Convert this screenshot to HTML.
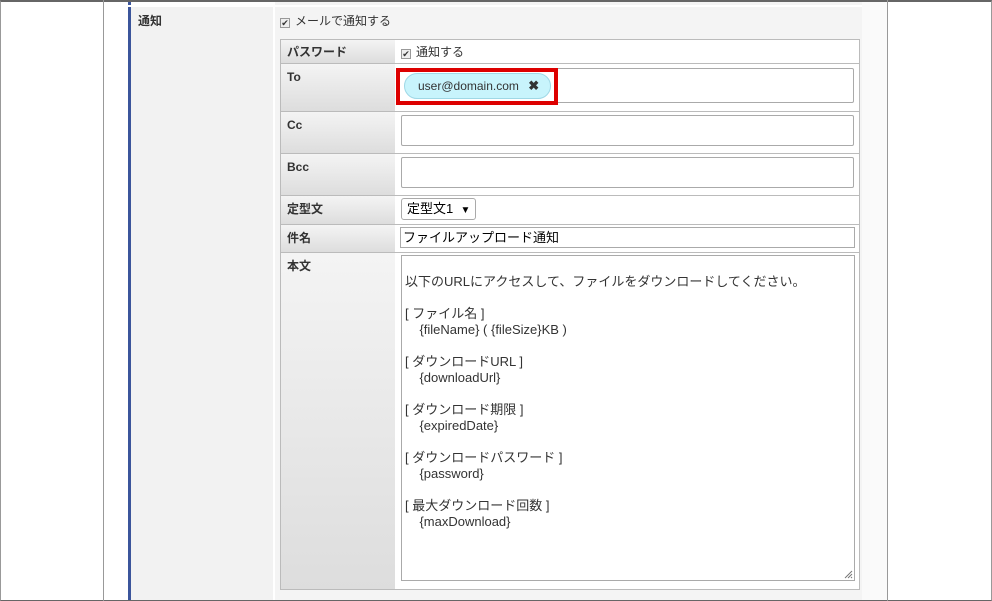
<!DOCTYPE html>
<html><head><meta charset="utf-8"><style>
*{box-sizing:border-box}
body{margin:0;width:992px;height:601px;background:#fff;font-family:"Liberation Sans","Noto Sans CJK JP",sans-serif;font-size:12px;color:#333;position:relative;overflow:hidden}
div{position:absolute}
.cb{display:inline-block;width:10px;height:10px;border:1px solid #999;background:#eee;vertical-align:-1px;margin-right:5px;position:relative;font-size:9px;line-height:8px;text-align:center;color:#333}
.h{left:280px;width:116px;background:linear-gradient(#f4f4f4,#ddd);font-weight:bold;padding:6px 6px;font-size:12px;line-height:14px;border:1px solid #bbb}
.v{left:395px;width:465px;background:#fff;border:1px solid #bbb;border-left:none;line-height:14px}
.inp{border:1px solid #aaa;border-radius:2px;background:#fff}
</style></head><body>
<div style="left:0;top:0;width:992px;height:601px;border-top:2px solid #666;border-bottom:1px solid #666;border-left:1px solid #999;border-right:1px solid #999"></div>
<div style="left:103px;top:0;width:1px;height:601px;background:#999"></div>
<div style="left:887px;top:0;width:1px;height:601px;background:#999"></div>
<div style="left:862px;top:2px;width:25px;height:598px;background:#fafafa"></div>
<div style="left:128px;top:2px;width:3px;height:3px;background:#3b559b"></div>
<div style="left:275px;top:2px;width:587px;height:3px;background:#f4f4f4"></div>
<div style="left:128px;top:7px;width:145px;height:593px;background:#f2f2f2;border-left:3px solid #3b559b"><div style="left:7px;top:5px;font-weight:bold">通知</div></div>
<div style="left:275px;top:7px;width:587px;height:593px;background:#f4f4f4"><div style="left:5px;top:5px;white-space:nowrap"><span class="cb">✔</span>メールで通知する</div></div>

<div class="h" style="top:39px;height:25px;padding-top:5px">パスワード</div>
<div class="v" style="top:39px;height:25px;padding:5px 6px"><span class="cb">✔</span>通知する</div>
<div class="h" style="top:63px;height:49px">To</div>
<div class="v" style="top:63px;height:49px"></div>
<div class="h" style="top:111px;height:43px">Cc</div>
<div class="v" style="top:111px;height:43px"></div>
<div class="h" style="top:153px;height:43px">Bcc</div>
<div class="v" style="top:153px;height:43px"></div>
<div class="h" style="top:195px;height:30px">定型文</div>
<div class="v" style="top:195px;height:30px"></div>
<div class="h" style="top:224px;height:29px">件名</div>
<div class="v" style="top:224px;height:29px"></div>
<div class="h" style="top:252px;height:338px">本文</div>
<div class="v" style="top:252px;height:338px"></div>

<div class="inp" style="left:401px;top:68px;width:453px;height:35px"></div>
<div style="left:396px;top:68px;width:162px;height:37px;border:4px solid #d00;background:#fff"></div>
<div style="left:404px;top:73px;width:147px;height:26px;background:#c8f4fc;border:1px solid #9fd8e6;border-radius:13px;line-height:24px;padding-left:13px;font-size:12px;color:#333;white-space:nowrap">user@domain.com <b style="margin-left:6px;font-size:13px">✖</b></div>
<div class="inp" style="left:401px;top:115px;width:453px;height:31px"></div>
<div class="inp" style="left:401px;top:157px;width:453px;height:31px"></div>
<div style="left:401px;top:198px;width:75px;height:22px;border:1px solid #aaa;border-radius:3px;padding:0 5px;font-size:13px;line-height:20px;color:#000;background:#fff;white-space:nowrap">定型文1 &nbsp;<span style="font-size:10px">▼</span></div>
<div style="left:400px;top:227px;width:455px;height:21px;border:1px solid #aaa;font-size:13px;color:#000;padding:0 2px;line-height:19px">ファイルアップロード通知</div>
<div style="left:401px;top:255px;width:454px;height:326px;border:1px solid #aaa;font-size:13px;color:#333;line-height:16px;padding:18px 3px 0">
以下のURLにアクセスして、ファイルをダウンロードしてください。<br><br>[ ファイル名 ]<br>&nbsp;&nbsp;&nbsp;&nbsp;{fileName} ( {fileSize}KB )<br><br>[ ダウンロードURL ]<br>&nbsp;&nbsp;&nbsp;&nbsp;{downloadUrl}<br><br>[ ダウンロード期限 ]<br>&nbsp;&nbsp;&nbsp;&nbsp;{expiredDate}<br><br>[ ダウンロードパスワード ]<br>&nbsp;&nbsp;&nbsp;&nbsp;{password}<br><br>[ 最大ダウンロード回数 ]<br>&nbsp;&nbsp;&nbsp;&nbsp;{maxDownload}
<svg style="position:absolute;right:1px;bottom:1px" width="9" height="9"><path d="M8 1L1 8M8 4L4 8M8 7L7 8" stroke="#777"/></svg></div>
</body></html>
